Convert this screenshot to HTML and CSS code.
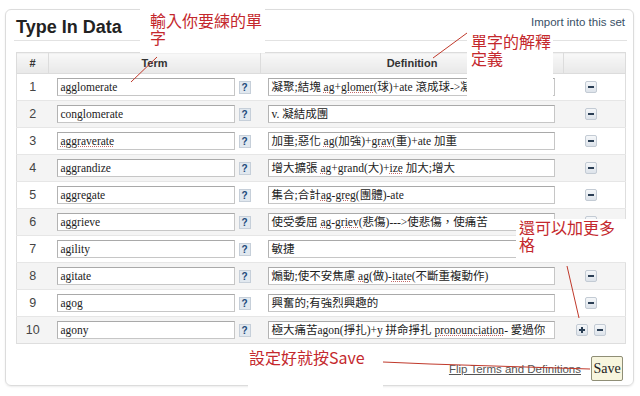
FILE: index.html
```html
<!DOCTYPE html>
<html lang="zh-Hant">
<head>
    <meta charset="UTF-8">
    <meta name="viewport" content="width=device-width, initial-scale=1.0">
    <title>Type In Data</title>
    <link rel="stylesheet" href="styles.css">
</head>
<body>
    <div class="panel">
        <div class="panel-head">
            <h1 class="title">Type In Data</h1>
            <a class="import-link" href="#">Import into this set</a>
        </div>

        <table class="terms">
            <thead>
                <tr>
                    <th class="col-num">#</th>
                    <th class="col-term">Term</th>
                    <th class="col-def">Definition</th>
                    <th class="col-act"></th>
                </tr>
            </thead>
            <tbody>
                <tr>
                    <td class="num">1</td>
                    <td><div class="term-cell"><div class="field term">agglomerate</div><span class="help">?</span></div></td>
                    <td><div class="def-cell"><div class="field def">凝聚;結塊 <span class="sp">ag</span>+<span class="sp">glomer</span>(球)+ate 滾成球-&gt;凝聚</div></div></td>
                    <td><div class="actions"><span class="icon-btn minus"></span></div></td>
                </tr>
                <tr>
                    <td class="num">2</td>
                    <td><div class="term-cell"><div class="field term">conglomerate</div><span class="help">?</span></div></td>
                    <td><div class="def-cell"><div class="field def">v. 凝結成團</div></div></td>
                    <td><div class="actions"><span class="icon-btn minus"></span></div></td>
                </tr>
                <tr>
                    <td class="num">3</td>
                    <td><div class="term-cell"><div class="field term"><span class="sp">aggraverate</span></div><span class="help">?</span></div></td>
                    <td><div class="def-cell"><div class="field def">加重;惡化 <span class="sp">ag</span>(加強)+<span class="sp">grav</span>(重)+ate 加重</div></div></td>
                    <td><div class="actions"><span class="icon-btn minus"></span></div></td>
                </tr>
                <tr>
                    <td class="num">4</td>
                    <td><div class="term-cell"><div class="field term">aggrandize</div><span class="help">?</span></div></td>
                    <td><div class="def-cell"><div class="field def">增大擴張 <span class="sp">ag</span>+grand(大)+<span class="sp">ize</span> 加大;增大</div></div></td>
                    <td><div class="actions"><span class="icon-btn minus"></span></div></td>
                </tr>
                <tr>
                    <td class="num">5</td>
                    <td><div class="term-cell"><div class="field term">aggregate</div><span class="help">?</span></div></td>
                    <td><div class="def-cell"><div class="field def">集合;合計<span class="sp">ag</span>-<span class="sp">greg</span>(團體)-ate</div></div></td>
                    <td><div class="actions"><span class="icon-btn minus"></span></div></td>
                </tr>
                <tr>
                    <td class="num">6</td>
                    <td><div class="term-cell"><div class="field term">aggrieve</div><span class="help">?</span></div></td>
                    <td><div class="def-cell"><div class="field def">使受委屈 <span class="sp">ag</span>-<span class="sp">griev</span>(悲傷)---&gt;使悲傷，使痛苦</div></div></td>
                    <td><div class="actions"><span class="icon-btn minus"></span></div></td>
                </tr>
                <tr>
                    <td class="num">7</td>
                    <td><div class="term-cell"><div class="field term">agility</div><span class="help">?</span></div></td>
                    <td><div class="def-cell"><div class="field def">敏捷</div></div></td>
                    <td><div class="actions"><span class="icon-btn minus"></span></div></td>
                </tr>
                <tr>
                    <td class="num">8</td>
                    <td><div class="term-cell"><div class="field term">agitate</div><span class="help">?</span></div></td>
                    <td><div class="def-cell"><div class="field def">煽動;使不安焦慮 <span class="sp">ag</span>(做)-<span class="sp">itate</span>(不斷重複動作)</div></div></td>
                    <td><div class="actions"><span class="icon-btn minus"></span></div></td>
                </tr>
                <tr>
                    <td class="num">9</td>
                    <td><div class="term-cell"><div class="field term">agog</div><span class="help">?</span></div></td>
                    <td><div class="def-cell"><div class="field def">興奮的;有強烈興趣的</div></div></td>
                    <td><div class="actions"><span class="icon-btn minus"></span></div></td>
                </tr>
                <tr>
                    <td class="num">10</td>
                    <td><div class="term-cell"><div class="field term">agony</div><span class="help">?</span></div></td>
                    <td><div class="def-cell"><div class="field def">極大痛苦agon(掙扎)+y 拼命掙扎 <span class="sp">pronounciation</span>- 愛過你</div></div></td>
                    <td><div class="actions"><span class="icon-btn plus"></span><span class="icon-btn minus"></span></div></td>
                </tr>
            </tbody>
        </table>

        <div class="panel-foot">
            <a class="flip-link" href="#">Flip Terms and Definitions</a>
            <button class="save-btn">Save</button>
        </div>
    </div>

    <!-- annotations pasted over the screenshot -->
    <div class="note note-term">輸入你要練的單字</div>
    <div class="note note-def">單字的解釋定義</div>
    <div class="note note-more">還可以加更多格</div>
    <div class="note note-save">設定好就按Save</div>

    <svg class="arrows" width="640" height="396" viewBox="0 0 640 396">
        <line x1="157" y1="57" x2="131" y2="82"/>
        <line x1="467" y1="33" x2="433" y2="58"/>
        <line x1="567" y1="266" x2="579" y2="318"/>
        <polyline points="383,362 430,364 590,369"/>
    </svg>
</body>
</html>
```

FILE: styles.css
```css
* {
    box-sizing: border-box;
}

body {
    position: relative;
    width: 640px;
    height: 396px;
    margin: 0;
    overflow: hidden;
    background: #fff;
    font-family: "Liberation Sans", Arial, sans-serif;
    color: #333;
}

.panel {
    height: 377px;
    margin: 9px 6px 0 5px;
    padding: 0 6px 0 8px;
    border: 1px solid #dcdcdc;
    border-radius: 6px;
    box-shadow: 0 1px 2px rgba(0,0,0,0.08);
}

.panel-head {
    display: flex;
    justify-content: space-between;
    align-items: flex-start;
    height: 31px;
    padding: 0 2px;
    border-bottom: 1px solid #e2e2e2;
}

.title {
    margin: 7px 0 0;
    font-size: 18px;
    line-height: 21px;
    font-weight: 700;
    color: #222;
}

.import-link {
    margin-top: 5px;
    font-size: 11.5px;
    line-height: 14px;
    color: #394f66;
    text-decoration: none;
}

.terms {
    width: 609px;
    margin: 11px 2px 0;
    border-collapse: collapse;
    border: 1px solid #dedede;
    table-layout: fixed;
}

.terms th {
    height: 21px;
    padding: 0;
    background: linear-gradient(#f8f8f8, #e8e8e8);
    border: 1px solid #dcdcdc;
    font-size: 11px;
    font-weight: 700;
    color: #333;
    text-align: center;
}

.col-num { width: 32px; }
.col-term { width: 212px; }
.col-def { width: 303px; }
.col-act { width: 62px; }

.terms td {
    height: 27px;
    padding: 0;
    border-top: 1px solid #e6e6e6;
    vertical-align: middle;
}

.terms tbody tr:nth-child(even) td {
    background: #f4f4f4;
}

.num {
    text-align: center;
    font-size: 12.5px;
    color: #444;
}

.term-cell {
    display: flex;
    align-items: center;
    gap: 4px;
    padding-left: 8px;
}

.def-cell {
    padding-left: 7px;
}

.field {
    height: 18px;
    padding: 0 3px;
    background: #fff;
    border: 1px solid #c6c6c6;
    border-top-color: #a9a9a9;
    border-left-color: #b3b3b3;
    font-family: "Liberation Serif", "Noto Sans CJK TC", serif;
    font-size: 11.5px;
    line-height: 16px;
    color: #222;
    white-space: nowrap;
    overflow: hidden;
}

.field.term {
    width: 178px;
}

.field.def {
    width: 287px;
}

.sp {
    text-decoration: underline dotted #c46a6a;
}

.help {
    display: flex;
    align-items: center;
    justify-content: center;
    width: 12px;
    height: 13px;
    background: #e1e8ef;
    border: 1px solid #c6cfd9;
    font-size: 10px;
    font-weight: 700;
    color: #20497a;
}

.actions {
    display: flex;
    justify-content: center;
    gap: 6px;
    padding-right: 6px;
}

.icon-btn {
    position: relative;
    width: 12px;
    height: 12px;
    background: linear-gradient(#f5f7f9, #dde3ea);
    border: 1px solid #c3cbd4;
    border-radius: 2px;
}

.icon-btn:before {
    position: absolute;
    content: "";
    left: 2px;
    top: 4px;
    width: 6px;
    height: 2px;
    background: #2b3f55;
}

.plus:after {
    position: absolute;
    content: "";
    left: 4px;
    top: 2px;
    width: 2px;
    height: 6px;
    background: #2b3f55;
}

.panel-foot {
    display: flex;
    justify-content: flex-end;
    align-items: center;
    gap: 10px;
    margin-top: 12px;
    padding-right: 4px;
}

.flip-link {
    font-size: 11.5px;
    color: #555;
    text-decoration: underline;
}

.save-btn {
    width: 32px;
    height: 25px;
    padding: 0;
    background: #f7f5de;
    border: 1px solid #8f8e76;
    border-radius: 2px;
    font-family: "Liberation Serif", serif;
    font-size: 14px;
    color: #222;
}

.note {
    position: absolute;
    background: #fff;
    color: #c4282d;
    font-family: "Noto Sans CJK TC", sans-serif;
    font-size: 16px;
    line-height: 17px;
}

.note-term {
    left: 140px;
    top: 8px;
    width: 125px;
    height: 45px;
    padding: 4px 0 0 10px;
}

.note-def {
    left: 467px;
    top: 32px;
    width: 86px;
    height: 66px;
    padding: 1px 0 0 4px;
}

.note-more {
    left: 516px;
    top: 219px;
    width: 111px;
    height: 43px;
    padding: 0 0 0 3px;
}

.note-save {
    left: 248px;
    top: 346px;
    width: 135px;
    height: 50px;
    padding: 3px 0 0 1px;
}

.arrows {
    position: absolute;
    left: 0;
    top: 0;
    pointer-events: none;
}

.arrows line,
.arrows polyline {
    fill: none;
    stroke: #c0392b;
    stroke-width: 1;
}
```
